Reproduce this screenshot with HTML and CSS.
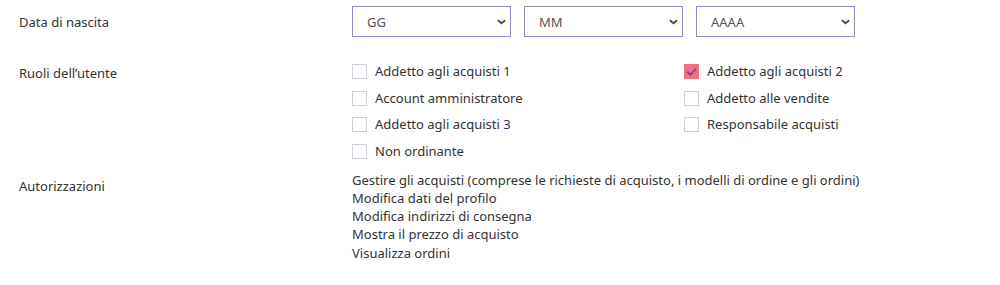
FILE: index.html
```html
<!DOCTYPE html>
<html lang="it">
    <head>
        <meta charset="UTF-8">
        <title>Profilo utente</title>
        <link rel="stylesheet" href="styles.css">
    </head>
    <body>
        <div class="profile-form">
            <div class="form-row row-birth">
                <div class="form-label">Data di nascita</div>
                <div class="date-selects">
                    <div class="select-box"><span>GG</span><svg class="chevron" viewBox="0 0 10 6"><path d="M1 1 L5 4.5 L9 1"/></svg></div>
                    <div class="select-box"><span>MM</span><svg class="chevron" viewBox="0 0 10 6"><path d="M1 1 L5 4.5 L9 1"/></svg></div>
                    <div class="select-box"><span>AAAA</span><svg class="chevron" viewBox="0 0 10 6"><path d="M1 1 L5 4.5 L9 1"/></svg></div>
                </div>
            </div>

            <div class="form-row row-roles">
                <div class="form-label">Ruoli dell’utente</div>
                <div class="role-grid">
                    <label class="role"><span class="check"></span>Addetto agli acquisti 1</label>
                    <label class="role"><span class="check checked"><svg viewBox="0 0 15 15"><path d="M3.2 7.6 L6.4 10.8 L12.2 4.4"/></svg></span>Addetto agli acquisti 2</label>
                    <label class="role"><span class="check"></span>Account amministratore</label>
                    <label class="role"><span class="check"></span>Addetto alle vendite</label>
                    <label class="role"><span class="check"></span>Addetto agli acquisti 3</label>
                    <label class="role"><span class="check"></span>Responsabile acquisti</label>
                    <label class="role"><span class="check"></span>Non ordinante</label>
                </div>
            </div>

            <div class="form-row row-perms">
                <div class="form-label">Autorizzazioni</div>
                <ul class="perm-list">
                    <li>Gestire gli acquisti (comprese le richieste di acquisto, i modelli di ordine e gli ordini)</li>
                    <li>Modifica dati del profilo</li>
                    <li>Modifica indirizzi di consegna</li>
                    <li>Mostra il prezzo di acquisto</li>
                    <li>Visualizza ordini</li>
                </ul>
            </div>
        </div>
    </body>
</html>
```

FILE: styles.css
```css
:root {
    --text: #333333;
    --select-border: #8e8ecd;
    --box-border: #cfcfd6;
    --pink: #f16f83;
    --purple: #5656a6;
}

html, body {
    margin: 0;
    padding: 0;
    background: #ffffff;
}

body {
    font-family: "Noto Sans", "Open Sans", sans-serif;
    font-size: 13px;
    color: var(--text);
}

.profile-form {
    padding: 6px 0 0 19px;
}

.form-row {
    display: grid;
    grid-template-columns: 333px 1fr;
}

.form-label {
    line-height: 18px;
}

/* date of birth */
.row-birth .form-label {
    padding-top: 7px;
}

.date-selects {
    display: flex;
    column-gap: 13px;
}

.select-box {
    width: 159px;
    height: 31px;
    box-sizing: border-box;
    border: 1px solid var(--select-border);
    display: flex;
    align-items: center;
    justify-content: space-between;
    padding: 0 4px 0 14px;
}

.select-box span {
    color: #555555;
}

.chevron {
    width: 9px;
    height: 6px;
    fill: none;
    stroke: #444444;
    stroke-width: 2;
}

/* roles */
.row-roles {
    margin-top: 27px;
}

.role-grid {
    display: grid;
    grid-template-columns: 332px 1fr;
    row-gap: 11.5px;
}

.role {
    display: flex;
    align-items: center;
    column-gap: 8px;
    line-height: 15px;
}

.check {
    width: 15px;
    height: 15px;
    box-sizing: border-box;
    border: 1px solid var(--box-border);
    flex: none;
}

.check.checked {
    background: var(--pink);
    border-color: var(--pink);
}

.check svg {
    display: block;
    width: 15px;
    height: 15px;
    margin: -1px;
    fill: none;
    stroke: var(--purple);
    stroke-width: 1.8;
}

/* permissions */
.row-perms {
    margin-top: 12px;
}

.row-perms .form-label {
    padding-top: 6px;
}

.perm-list {
    list-style: none;
    margin: 0;
    padding: 0;
    line-height: 18.25px;
}
```
